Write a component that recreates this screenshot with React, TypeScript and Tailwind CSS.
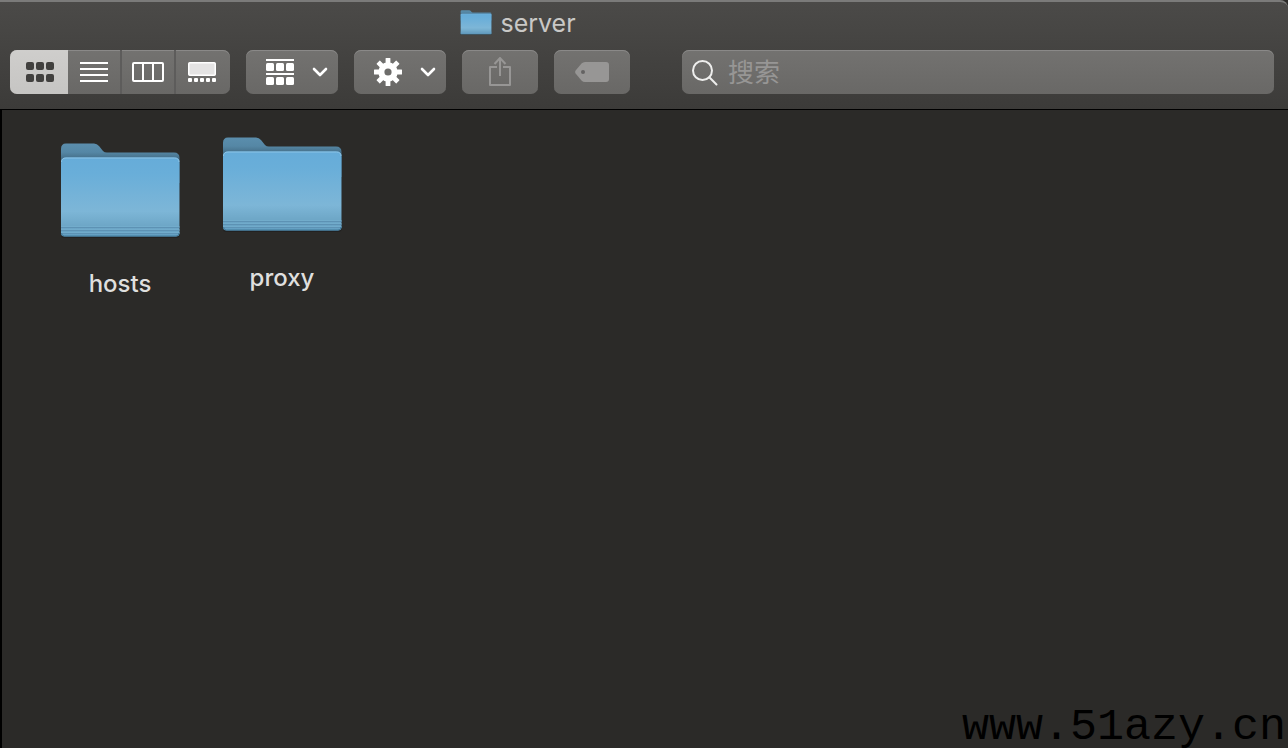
import { useState } from "react";

const folders = [
  { name: "hosts", offset: "mt-[6px]" },
  { name: "proxy", offset: "" },
];

const buttonStyle =
  "h-11 rounded-[7px] bg-linear-to-b from-[#737270] to-[#696866] shadow-[inset_0_1px_0_#8a8988]";

function FolderIcon({ id, className }: { id: string; className: string }) {
  return (
    <svg viewBox="0 0 120 96" className={className} aria-hidden="true">
      <defs>
        <linearGradient id={`${id}-back`} x1="0" y1="0" x2="0" y2="1">
          <stop offset="0" stopColor="#5b8ead" />
          <stop offset="0.22" stopColor="#5587a5" />
          <stop offset="0.38" stopColor="#456f89" />
          <stop offset="1" stopColor="#456f89" />
        </linearGradient>
        <linearGradient id={`${id}-front`} x1="0" y1="0" x2="0" y2="1">
          <stop offset="0" stopColor="#66acd9" />
          <stop offset="0.2" stopColor="#69aed9" />
          <stop offset="0.68" stopColor="#7db6d7" />
          <stop offset="0.86" stopColor="#6ea7c7" />
          <stop offset="1" stopColor="#649fc2" />
        </linearGradient>
      </defs>
      <rect x="1" y="18" width="118.500" height="77" rx="3" fill="#1d1d1c" opacity="0.6" />
      <path
        d="M1 6Q1 0.500 6 0.500H34Q37 0.500 39 3L43 8Q44.500 9.500 47 9.500H114Q119.500 9.500 119.500 15V40H1Z"
        fill={`url(#${id}-back)`}
      />
      <path d="M1 20Q1 14.500 6 14.500H114.500Q119.500 14.500 119.500 20V90Q119.500 93.500 116 93.500H4.500Q1 93.500 1 90Z" fill={`url(#${id}-front)`} />
      <path d="M1.500 19Q1.500 15 6 15H114.500Q119 15 119 19" fill="none" stroke="#8cc4e7" strokeWidth="1" />
      <path d="M1 84.500H119.500M1 87.500H119.500M1 90.500H119.500" stroke="#5d92b4" strokeWidth="1" />
      <path d="M1 83.500H119.500M1 86.500H119.500M1 89.500H119.500" stroke="#74adcd" strokeWidth="0.8" />
      <path d="M1.500 90Q1.500 93 4.500 93H116Q119 93 119 90" fill="none" stroke="#437c9d" strokeWidth="1" />
    </svg>
  );
}

function GridIcon() {
  return (
    <svg width="28" height="20" viewBox="0 0 28 20" fill="currentColor">
      {[0, 12].map((y) =>
        [0, 10, 20].map((x) => <rect key={`${x}-${y}`} x={x} y={y} width="8" height="8" rx="2" />)
      )}
    </svg>
  );
}

function ListIcon() {
  return (
    <svg width="28" height="20" viewBox="0 0 28 20" fill="none" stroke="currentColor" strokeWidth="2">
      <path d="M0 1H28M0 7H28M0 13H28M0 19H28" />
    </svg>
  );
}

function ColumnsIcon() {
  return (
    <svg width="32" height="20" viewBox="0 0 32 20" fill="none" stroke="currentColor" strokeWidth="2">
      <rect x="1" y="1" width="30" height="18" rx="1" />
      <path d="M11 1V19M21 1V19" />
    </svg>
  );
}

function GalleryIcon() {
  return (
    <svg width="28" height="20" viewBox="0 0 28 20" fill="currentColor">
      <rect x="0.750" y="0.750" width="26.500" height="12.500" rx="1" fill="#e4e3e3" stroke="currentColor" strokeWidth="1.500" />
      {[0, 6, 12, 18, 24].map((x) => (
        <rect key={x} x={x} y="16" width="4" height="4" rx="1" />
      ))}
    </svg>
  );
}

function ArrangeIcon() {
  return (
    <svg width="28" height="26" viewBox="0 0 28 26" fill="currentColor">
      <path d="M0 0H28V2H0ZM0 14H28V16H0Z" />
      {[4, 18].map((y) =>
        [0, 10, 20].map((x) => <rect key={`${x}-${y}`} x={x} y={y} width="8" height="8" rx="1.500" />)
      )}
    </svg>
  );
}

function GearIcon() {
  return (
    <svg width="28" height="28" viewBox="0 0 28 28">
      {[0, 45, 90, 135].map((angle) => (
        <path
          key={angle}
          d="M11.600 0.500Q11.600 0 12.100 0H15.900Q16.400 0 16.400 0.500V27.500Q16.400 28 15.900 28H12.100Q11.600 28 11.600 27.500Z"
          fill="currentColor"
          transform={`rotate(${angle} 14 14)`}
        />
      ))}
      <circle cx="14" cy="14" r="9.700" fill="currentColor" />
      <circle cx="14" cy="14" r="3.600" fill="#6e6d6b" />
    </svg>
  );
}

function ChevronIcon() {
  return (
    <svg width="16" height="10" viewBox="0 0 16 10" fill="none" stroke="currentColor" strokeWidth="2.600" strokeLinecap="round" strokeLinejoin="round">
      <path d="M2 2L8 8L14 2" />
    </svg>
  );
}

function ShareIcon() {
  return (
    <svg width="22" height="30" viewBox="0 0 22 30" fill="none" stroke="currentColor" strokeWidth="2">
      <path d="M8 10H1V28H21V10H14" strokeLinejoin="round" />
      <path d="M11 19V0.500M5.500 7L11 1L16.500 7" />
    </svg>
  );
}

function TagIcon() {
  return (
    <svg width="34" height="20" viewBox="0 0 34 20">
      <path
        fill="currentColor"
        d="M10 0H31Q34 0 34 3V17Q34 20 31 20H10Q8 20 6.500 18.500L0.600 11.500Q-0.400 10 0.600 8.500L6.500 1.500Q8 0 10 0Z"
      />
      <circle cx="8" cy="10" r="2" fill="#646362" />
    </svg>
  );
}

function SearchIcon() {
  return (
    <svg width="26" height="26" viewBox="0 0 26 26" fill="none" stroke="#eeeeed" strokeWidth="2">
      <circle cx="10.500" cy="10.500" r="9.500" />
      <path d="M17.300 17.300L24.500 24.500" strokeLinecap="round" />
    </svg>
  );
}

const views = [
  { id: "icons", label: "图标", icon: <GridIcon />, width: "w-[58px] pl-[2px]" },
  { id: "list", label: "列表", icon: <ListIcon />, width: "w-[52px]" },
  { id: "columns", label: "分栏", icon: <ColumnsIcon />, width: "w-[54px] border-l-2 border-[#5d5c5b]" },
  { id: "gallery", label: "画廊", icon: <GalleryIcon />, width: "w-[56px] border-l-2 border-[#5d5c5b] pr-[2px]" },
];

export default function App() {
  const [view, setView] = useState("icons");

  return (
    <div className="relative flex min-h-screen flex-col overflow-hidden bg-[#2b2a28] font-['Inter','Noto_Sans_CJK_SC',sans-serif]">
      <header className="rounded-tr-lg border-t-2 border-b border-t-[#7b7b7a] border-b-black bg-linear-to-b from-[#4b4a48] to-[#3c3b39]">
        {/* Title bar */}
        <div className="flex h-12 w-[1036px] max-w-full items-start justify-center gap-2 pt-[5px]">
          <FolderIcon id="title" className="mt-[3px] h-[25px] w-8" />
          <h1 className="text-[25px] leading-8 text-[#c9c8c6]">server</h1>
        </div>

        {/* Toolbar */}
        <div className="flex items-center pb-[15px] pr-[14px] pl-[10px] text-white">
          <div className={`mr-4 flex overflow-hidden ${buttonStyle}`}>
            {views.map((item) => (
              <button
                key={item.id}
                type="button"
                aria-label={item.label}
                aria-pressed={view === item.id}
                onClick={() => setView(item.id)}
                className={`flex items-center justify-center ${item.width} ${
                  view === item.id ? "bg-linear-to-b from-[#cfcecc] to-[#c6c5c3] text-[#41403e]" : ""
                }`}
              >
                {item.icon}
              </button>
            ))}
          </div>
          <button type="button" aria-label="排列" className={`mr-4 flex w-[92px] items-center justify-between pr-[10px] pl-5 ${buttonStyle}`}>
            <ArrangeIcon />
            <ChevronIcon />
          </button>
          <button type="button" aria-label="操作" className={`mr-4 flex w-[92px] items-center justify-between pr-[10px] pl-5 ${buttonStyle}`}>
            <GearIcon />
            <ChevronIcon />
          </button>
          <button type="button" aria-label="共享" className={`mr-4 flex w-[76px] items-center justify-center text-[#979695] ${buttonStyle}`}>
            <ShareIcon />
          </button>
          <button type="button" aria-label="标签" className={`mr-[52px] flex w-[76px] items-center justify-center text-[#979695] ${buttonStyle}`}>
            <TagIcon />
          </button>
          <label className={`flex min-w-0 flex-1 items-center gap-[10px] px-[10px] pt-[2px] ${buttonStyle}`}>
            <SearchIcon />
            <input
              type="search"
              aria-label="搜索"
              placeholder="搜索"
              className="min-w-0 flex-1 bg-transparent text-[26px] leading-8 outline-none placeholder:text-[#979695]"
            />
          </label>
        </div>
      </header>

      <main className="flex flex-1 items-start gap-[42px] border-l-2 border-black pt-[27px] pl-[58px]">
        {folders.map((folder) => (
          <a key={folder.name} href={`#${folder.name}`} className={`flex w-[120px] flex-col items-center gap-[29px] ${folder.offset}`}>
            <FolderIcon id={folder.name} className="h-24 w-[120px]" />
            <span className="text-2xl leading-8 font-medium text-[#dfdfde]">{folder.name}</span>
          </a>
        ))}
      </main>

      <p className="absolute right-[2px] bottom-0 font-['Liberation_Mono',monospace] text-[45px] leading-10 text-black">
        www.51azy.cn
      </p>
    </div>
  );
}
